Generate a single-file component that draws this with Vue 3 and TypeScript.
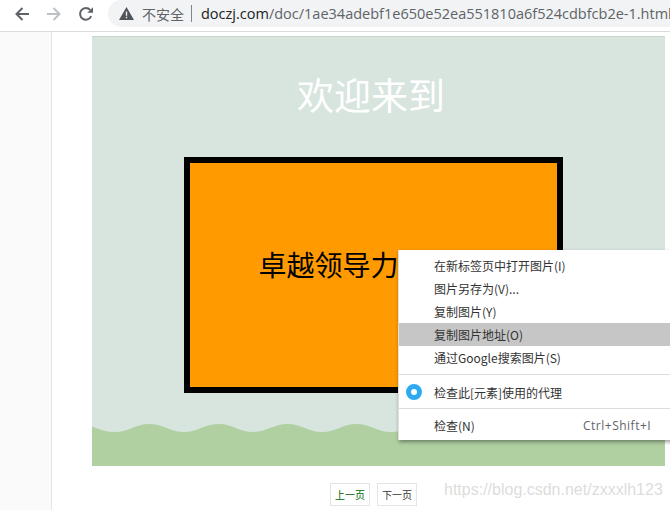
<template>
  <div class="browser">
    <header class="toolbar">
      <button class="nav-btn">
        <svg width="16" height="16" viewBox="0 0 16 16"><path d="M15 8H3M8.5 2 2.5 8l6 6" fill="none" stroke="#5f6368" stroke-width="2" /></svg>
      </button>
      <button class="nav-btn">
        <svg width="16" height="16" viewBox="0 0 16 16"><path d="M1 8h12M7.5 2l6 6-6 6" fill="none" stroke="#bdc1c6" stroke-width="2" /></svg>
      </button>
      <button class="nav-btn">
        <svg width="16" height="16" viewBox="0 0 16 16">
          <path d="M13.2 10.2A5.8 5.8 0 1 1 12.2 4" fill="none" stroke="#5f6368" stroke-width="2" />
          <path d="M9.4 6.8H15V1.2z" fill="#5f6368" />
        </svg>
      </button>
      <div class="omnibox">
        <svg class="warn" width="15" height="13" viewBox="0 0 15 13"><path d="M7.5 0 15 13H0zM6.8 4.6v4.2h1.4V4.6zm0 5.2v1.4h1.4V9.8z" fill="#50545a" fill-rule="evenodd" /></svg>
        <span class="insecure">不安全</span>
        <span class="divider"></span>
        <span class="url"><b>doczj.com</b>/doc/1ae34adebf1e650e52ea551810a6f524cdbfcb2e-1.html</span>
      </div>
    </header>

    <div class="content">
      <aside class="sidebar"></aside>
      <main class="page">
        <section class="slide">
          <h1 class="title">欢迎来到</h1>
          <div class="box">卓越领导力培训班</div>
          <svg class="wave" width="573" height="42" viewBox="0 0 573 42"><path :d="wavePath" fill="#b0d0a2" /></svg>
        </section>
        <nav class="pager">
          <a class="prev">上一页</a>
          <a>下一页</a>
        </nav>
      </main>
    </div>

    <div class="context-menu">
      <div v-for="item in topItems" :key="item.label" class="menu-row" :class="{ active: item.active }">{{ item.label }}</div>
      <div class="menu-sep"></div>
      <div class="menu-row">
        <span class="ext-icon"></span>
        检查此[元素]使用的代理
      </div>
      <div class="menu-sep tight"></div>
      <div class="menu-row">
        检查(N)
        <span class="shortcut">Ctrl+Shift+I</span>
      </div>
    </div>

    <div class="watermark">https://blog.csdn.net/zxxxlh123</div>
  </div>
</template>

<script setup lang="ts">
const topItems = [
  { label: '在新标签页中打开图片(I)' },
  { label: '图片另存为(V)...' },
  { label: '复制图片(Y)' },
  { label: '复制图片地址(O)', active: true },
  { label: '通过Google搜索图片(S)' }
]

// 波浪：周期 69px，波峰 y=0，波谷 y=8
const buildWave = () => {
  const period = 69
  let d = 'M0 2.5C8 6 15 8 23 8'
  for (let x = 23; x < 573; x += period) {
    const mid = x + period / 2
    const end = x + period
    d += `C${x + 14} 8 ${mid - 14} 0 ${mid} 0C${mid + 14} 0 ${end - 14} 8 ${end} 8`
  }
  return d + 'V42H0Z'
}

const wavePath = buildWave()
</script>

<style scoped>
.browser {
  position: relative;
  width: 670px;
  height: 510px;
  overflow: hidden;
  background: #fff;
  font-family: "Noto Sans CJK SC", sans-serif;
}

.toolbar {
  display: flex;
  align-items: flex-start;
  height: 31px;
  padding-left: 6px;
  background: #fff;
  border-bottom: 1px solid #dcdcdc;
  box-sizing: content-box;
}

.nav-btn {
  display: flex;
  align-items: center;
  justify-content: center;
  width: 32px;
  height: 27px;
  padding: 0;
  background: none;
  border: 0;
}

.omnibox {
  display: flex;
  align-items: center;
  flex: 1;
  min-width: 0;
  height: 27px;
  margin-left: 6px;
  padding-left: 11px;
  overflow: hidden;
  background: #f1f3f4;
  border-radius: 14px 0 0 14px;
  white-space: nowrap;
}

.warn {
  flex: none;
}

.insecure {
  margin-left: 8px;
  font-size: 14px;
  color: #5f6368;
}

.divider {
  flex: none;
  width: 1px;
  height: 17px;
  margin: 0 9px 0 7px;
  background: #80868b;
}

.url {
  font-family: "Open Sans", sans-serif;
  font-size: 14.5px;
  color: #5f6368;
}

.url b {
  font-weight: 400;
  color: #202124;
}

.content {
  display: flex;
  height: 478px;
}

.sidebar {
  flex: none;
  width: 51px;
  background: #fafafa;
  border-right: 1px solid #e4e4e4;
}

.page {
  flex: 1;
  padding: 4px 0 0 40px;
}

.slide {
  display: flex;
  flex-direction: column;
  align-items: flex-start;
  width: 573px;
  height: 430px;
  background: #d7e5de;
  border-top: 1px solid #c6d9c9;
  box-sizing: border-box;
}

.title {
  margin: 31px 0 0 205px;
  font-family: "Noto Sans CJK SC", sans-serif;
  font-size: 37px;
  font-weight: 400;
  line-height: 52px;
  color: #fff;
}

.box {
  display: flex;
  align-items: center;
  justify-content: center;
  width: 379px;
  height: 236px;
  margin: 37px 0 0 92px;
  padding: 0 6px 22px 0;
  background: #ff9a00;
  border: 6px solid #000;
  box-sizing: border-box;
  font-family: "Noto Sans CJK SC", sans-serif;
  font-size: 28px;
  color: #000;
  white-space: nowrap;
}

.wave {
  display: block;
  margin-top: auto;
}

.pager {
  display: flex;
  gap: 7px;
  margin: 17px 0 0 238px;
}

.pager a {
  display: flex;
  align-items: center;
  justify-content: center;
  width: 40px;
  height: 23px;
  border: 1px solid #e4e4e4;
  box-sizing: border-box;
  font-size: 10px;
  color: #333;
}

.pager a.prev {
  color: #006600;
}

.context-menu {
  position: absolute;
  top: 250px;
  left: 398px;
  width: 290px;
  height: 190px;
  padding-top: 4px;
  background: #fff;
  border-left: 1px solid #e0e0e0;
  box-shadow: 1px 2px 4px rgba(0, 0, 0, 0.4);
  box-sizing: border-box;
  font-size: 12px;
  color: #333;
}

.menu-row {
  position: relative;
  display: flex;
  align-items: center;
  height: 23px;
  padding-left: 35px;
}

.menu-row.active {
  background: #c6c6c6;
}

.menu-sep {
  height: 1px;
  margin: 5px 0 6px;
  background: #dcdcdc;
}

.menu-sep.tight {
  margin: 4px 0 5px;
}

.ext-icon {
  position: absolute;
  top: 3px;
  left: 7px;
  width: 16px;
  height: 16px;
  border: 5px solid #2eaaf0;
  border-radius: 50%;
  box-sizing: border-box;
}

.shortcut {
  position: absolute;
  left: 184px;
  font-family: "Open Sans", sans-serif;
  letter-spacing: 0.5px;
  color: #5f6368;
}

.watermark {
  position: absolute;
  top: 481px;
  left: 444px;
  font-family: "Liberation Sans", sans-serif;
  font-size: 16px;
  color: rgba(190, 190, 190, 0.55);
}
</style>

<style>
html,
body {
  margin: 0;
  overflow: hidden;
}
</style>
